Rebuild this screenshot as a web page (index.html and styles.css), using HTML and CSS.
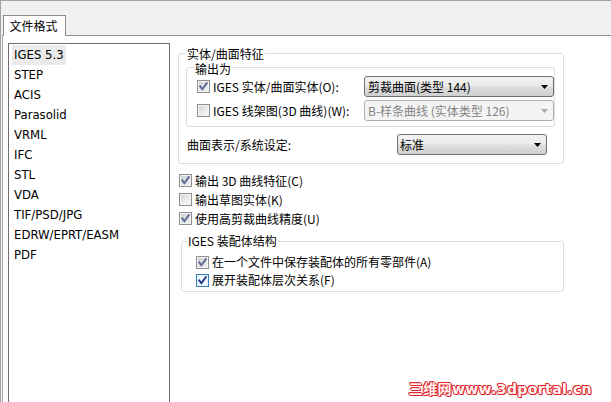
FILE: index.html
```html
<!DOCTYPE html>
<html lang="zh-CN">
<head>
<meta charset="utf-8">
<title>文件格式</title>
<link rel="stylesheet" href="styles.css">
</head>
<body>
<div class="window">
  <div class="tabbar">
    <div class="tab">文件格式</div>
  </div>
  <div class="panel">
    <ul class="formats">
      <li class="fmt selected"><span>IGES 5.3</span></li>
      <li class="fmt"><span>STEP</span></li>
      <li class="fmt"><span>ACIS</span></li>
      <li class="fmt"><span>Parasolid</span></li>
      <li class="fmt"><span>VRML</span></li>
      <li class="fmt"><span>IFC</span></li>
      <li class="fmt"><span>STL</span></li>
      <li class="fmt"><span>VDA</span></li>
      <li class="fmt"><span>TIF/PSD/JPG</span></li>
      <li class="fmt"><span>EDRW/EPRT/EASM</span></li>
      <li class="fmt"><span>PDF</span></li>
    </ul>
    <div class="options">
      <div class="group group-main">
        <span class="group-label label-main">实体/曲面特征</span>
        <div class="group group-out">
          <span class="group-label label-out">输出为</span>
          <div class="out-row">
            <span class="cb checked dim"><svg viewBox="0 0 13 13" width="13" height="13"><path d="M3.2 6.4 L5.4 9.2 L9.8 3.2" /></svg></span>
            <span class="cb-text">IGES 实体/曲面实体(O):</span>
            <div class="select">
              <span class="select-text">剪裁曲面(类型 144)</span>
              <svg class="arrow" viewBox="0 0 7 4" width="7" height="4"><polygon points="0,0 7,0 3.5,4" /></svg>
            </div>
          </div>
          <div class="out-row">
            <span class="cb"></span>
            <span class="cb-text">IGES 线架图(3D 曲线)(W):</span>
            <div class="select disabled">
              <span class="select-text">B-样条曲线 (实体类型 126)</span>
              <svg class="arrow" viewBox="0 0 7 4" width="7" height="4"><polygon points="0,0 7,0 3.5,4" /></svg>
            </div>
          </div>
        </div>
        <div class="surface-row">
          <span>曲面表示/系统设定:</span>
          <div class="select select-small">
            <span class="select-text">标准</span>
            <svg class="arrow" viewBox="0 0 7 4" width="7" height="4"><polygon points="0,0 7,0 3.5,4" /></svg>
          </div>
        </div>
      </div>

      <div class="checks">
        <div class="check-row">
          <span class="cb checked dim"><svg viewBox="0 0 13 13" width="13" height="13"><path d="M3.2 6.4 L5.4 9.2 L9.8 3.2" /></svg></span>
          <span class="cb-text">输出 3D 曲线特征(C)</span>
        </div>
        <div class="check-row">
          <span class="cb"></span>
          <span class="cb-text">输出草图实体(K)</span>
        </div>
        <div class="check-row">
          <span class="cb checked dim"><svg viewBox="0 0 13 13" width="13" height="13"><path d="M3.2 6.4 L5.4 9.2 L9.8 3.2" /></svg></span>
          <span class="cb-text">使用高剪裁曲线精度(U)</span>
        </div>
      </div>

      <div class="group group-asm">
        <span class="group-label label-asm">IGES 装配体结构</span>
        <div class="asm-row">
          <span class="cb checked dim"><svg viewBox="0 0 13 13" width="13" height="13"><path d="M3.2 6.4 L5.4 9.2 L9.8 3.2" /></svg></span>
          <span class="cb-text">在一个文件中保存装配体的所有零部件(A)</span>
        </div>
        <div class="asm-row">
          <span class="cb checked hot"><svg viewBox="0 0 13 13" width="13" height="13"><path d="M3.2 6.4 L5.4 9.2 L9.8 3.2" /></svg></span>
          <span class="cb-text">展开装配体层次关系(F)</span>
        </div>
      </div>
    </div>
  </div>
  <div class="watermark">三维网www.3dportal.cn</div>
</div>
</body>
</html>
```
FILE: styles.css
```css
html, body {
  margin: 0;
  padding: 0;
}
body {
  width: 611px;
  height: 402px;
  overflow: hidden;
  background: #ffffff;
  font-family: "Noto Sans CJK SC", "Microsoft YaHei", sans-serif;
  font-size: 12px;
  color: #000;
}
.window {
  position: relative;
  width: 611px;
  height: 402px;
  box-sizing: border-box;
  border-top: 1px solid #a3a3a3;
  border-left: 1px solid #a3a3a3;
  background: #f0f0f0;
  overflow: hidden;
}
.tabbar {
  height: 34px;
  display: flex;
  align-items: flex-end;
  padding-left: 2px;
}
.tab {
  position: relative;
  z-index: 1;
  box-sizing: border-box;
  width: 63px;
  height: 21px;
  margin-bottom: -1px;
  border: 1px solid #898c95;
  border-bottom: none;
  background: #fff;
  display: flex;
  align-items: center;
  justify-content: center;
  line-height: 14px;
  padding-right: 2px;
}
.panel {
  margin-left: 1px;
  height: 400px;
  background: #fff;
  border-top: 1px solid #898c95;
  border-left: 1px solid #a9a9a9;
  display: flex;
  align-items: flex-start;
  padding: 7px 0 0 5px;
}
.formats {
  list-style: none;
  margin: 0;
  padding: 1px 0 0 3px;
  box-sizing: border-box;
  width: 162px;
  height: 400px;
  border: 1px solid #6e6e6e;
  flex: none;
  font-family: "DejaVu Sans Condensed", "DejaVu Sans", sans-serif;
  font-stretch: condensed;
  font-size: 13px;
}
.fmt {
  height: 20px;
  display: flex;
  align-items: center;
}
.fmt span {
  padding: 0 2px;
  line-height: 20px;
}
.fmt.selected span {
  background: #ebebeb;
}
.options {
  margin-left: 8px;
  margin-top: 10px;
  width: 386px;
  flex: none;
}
.group {
  position: relative;
  border: 1px solid #d5dfe5;
  border-radius: 3px;
}
.group-label {
  position: absolute;
  background: #fff;
  padding: 0 1px;
  line-height: 12px;
  white-space: nowrap;
}
.group-main {
  padding: 13px 8px 8px 7px;
}
.label-main {
  top: -6px;
  left: 7px;
}
.group-out {
  padding: 8px 0 5px 10px;
}
.label-out {
  top: -5px;
  left: 7px;
}
.out-row {
  height: 21px;
  display: flex;
  align-items: center;
}
.out-row + .out-row {
  margin-top: 3px;
}
.cb {
  position: relative;
  flex: none;
  width: 13px;
  height: 13px;
  box-sizing: border-box;
  border: 1px solid #8e8f8f;
  background: linear-gradient(135deg, #cdd0d4 0%, #eeeeee 60%, #f7f7f7 100%);
  box-shadow: inset 0 0 0 1px #f4f4f4;
}
.cb svg {
  position: absolute;
  left: -1px;
  top: -1px;
}
.cb svg path {
  fill: none;
  stroke: #4b5c86;
  stroke-width: 1.9;
  stroke-linecap: square;
}
.cb.dim {
  background: linear-gradient(135deg, #c9ccd1 0%, #e4e5e7 60%, #efefef 100%);
}
.cb.dim svg path {
  stroke: #5a6a92;
}
.cb.hot {
  border-color: #3c7fb1;
  background: linear-gradient(135deg, #eaf6fd 0%, #ffffff 100%);
  box-shadow: inset 0 0 0 1px #def3fc;
}
.cb.hot svg path {
  stroke: #1e3a8a;
}
.cb-text {
  margin-left: 3px;
  line-height: 14px;
  white-space: nowrap;
}
.select {
  margin-left: auto;
  box-sizing: border-box;
  width: 190px;
  height: 21px;
  border: 1px solid #707070;
  border-radius: 3px;
  background: linear-gradient(#f2f2f2 0%, #ebebeb 45%, #dddddd 55%, #cfcfcf 100%);
  display: flex;
  align-items: center;
  padding: 0 5px 0 3px;
}
.select-text {
  flex: 1;
  line-height: 14px;
  white-space: nowrap;
}
.select .arrow polygon {
  fill: #000;
}
.select.disabled {
  border-color: #adb2b5;
  background: #f4f4f4;
  color: #838383;
}
.select.disabled .arrow polygon {
  fill: #a6a6a6;
}
.surface-row {
  margin-top: 7px;
  height: 21px;
  display: flex;
  align-items: center;
  padding-left: 1px;
  padding-right: 8px;
}
.select-small {
  width: 150px;
  padding-left: 2px;
}
.checks {
  margin-top: 7px;
  padding-left: 1px;
}
.check-row {
  height: 19px;
  display: flex;
  align-items: center;
}
.group-asm {
  margin-top: 13px;
  margin-left: 3px;
  padding: 11px 0 2px 14px;
}
.label-asm {
  top: -7px;
  left: 5px;
}
.asm-row {
  height: 18px;
  display: flex;
  align-items: center;
}
.watermark {
  position: absolute;
  right: 19px;
  top: 381px;
  font-family: "DejaVu Sans", "Noto Sans CJK SC", sans-serif;
  font-weight: bold;
  font-size: 14px;
  letter-spacing: 0.4px;
  line-height: 14px;
  color: #fff4f4;
  text-shadow: 1px 0 #e3262b, -1px 0 #e3262b, 0 1px #e3262b, 0 -1px #e3262b, 1px 1px #e3262b, -1px -1px #e3262b;
  white-space: nowrap;
}
```
